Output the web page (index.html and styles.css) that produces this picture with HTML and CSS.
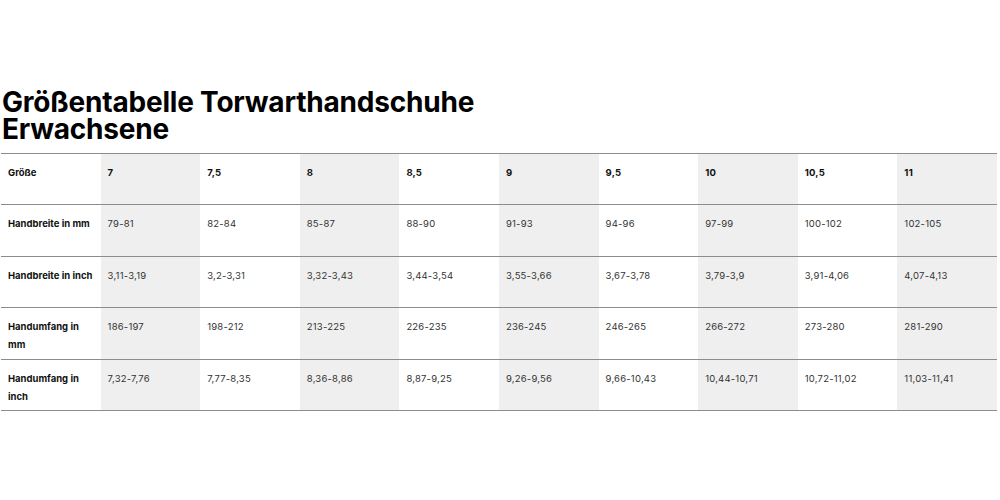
FILE: index.html
```html
<!DOCTYPE html>
<html lang="de">
<head>
<meta charset="utf-8">
<title>Größentabelle</title>
<link rel="stylesheet" href="styles.css">
</head>
<body>
<main class="page">
  <h1 class="title">Größentabelle Torwarthandschuhe<br>Erwachsene</h1>
  <table class="sizes">
    <tbody>
      <tr class="head">
        <th>Größe</th><td>7</td><td>7,5</td><td>8</td><td>8,5</td><td>9</td><td>9,5</td><td>10</td><td>10,5</td><td>11</td>
      </tr>
      <tr>
        <th>Handbreite in mm</th><td>79-81</td><td>82-84</td><td>85-87</td><td>88-90</td><td>91-93</td><td>94-96</td><td>97-99</td><td>100-102</td><td>102-105</td>
      </tr>
      <tr>
        <th>Handbreite in inch</th><td>3,11-3,19</td><td>3,2-3,31</td><td>3,32-3,43</td><td>3,44-3,54</td><td>3,55-3,66</td><td>3,67-3,78</td><td>3,79-3,9</td><td>3,91-4,06</td><td>4,07-4,13</td>
      </tr>
      <tr>
        <th>Handumfang in<br>mm</th><td>186-197</td><td>198-212</td><td>213-225</td><td>226-235</td><td>236-245</td><td>246-265</td><td>266-272</td><td>273-280</td><td>281-290</td>
      </tr>
      <tr>
        <th>Handumfang in<br>inch</th><td>7,32-7,76</td><td>7,77-8,35</td><td>8,36-8,86</td><td>8,87-9,25</td><td>9,26-9,56</td><td>9,66-10,43</td><td>10,44-10,71</td><td>10,72-11,02</td><td>11,03-11,41</td>
      </tr>
    </tbody>
  </table>
</main>
</body>
</html>
```
FILE: styles.css
```css
html, body {
  margin: 0;
  padding: 0;
  background: #ffffff;
}
.page {
  padding: 89px 3px 0 1px;
  font-family: Inter, "Noto Sans", "Liberation Sans", sans-serif;
  color: #111;
}
.title {
  margin: 0 0 0 1px;
  font-size: 28px;
  line-height: 27px;
  font-weight: 700;
  letter-spacing: -0.2px;
  color: #000;
}
.sizes {
  margin-top: 10px;
  width: 996px;
  border-collapse: collapse;
  table-layout: fixed;
  border-top: 1.5px solid #8c8c8c;
}
.sizes tr {
  height: 51.4px;
  border-bottom: 1.5px solid #8c8c8c;
}
.sizes th,
.sizes td {
  vertical-align: top;
  text-align: left;
  padding: 10px 0 0 7px;
  font-size: 9.5px;
  line-height: 18px;
  white-space: nowrap;
}
.sizes th {
  font-weight: 700;
  color: #111;
}
.sizes td {
  font-weight: 400;
  color: #333;
  letter-spacing: 0.2px;
}
.sizes tr.head td {
  font-weight: 700;
  color: #111;
}
.sizes td:nth-child(even) {
  background: #efefef;
}
```
